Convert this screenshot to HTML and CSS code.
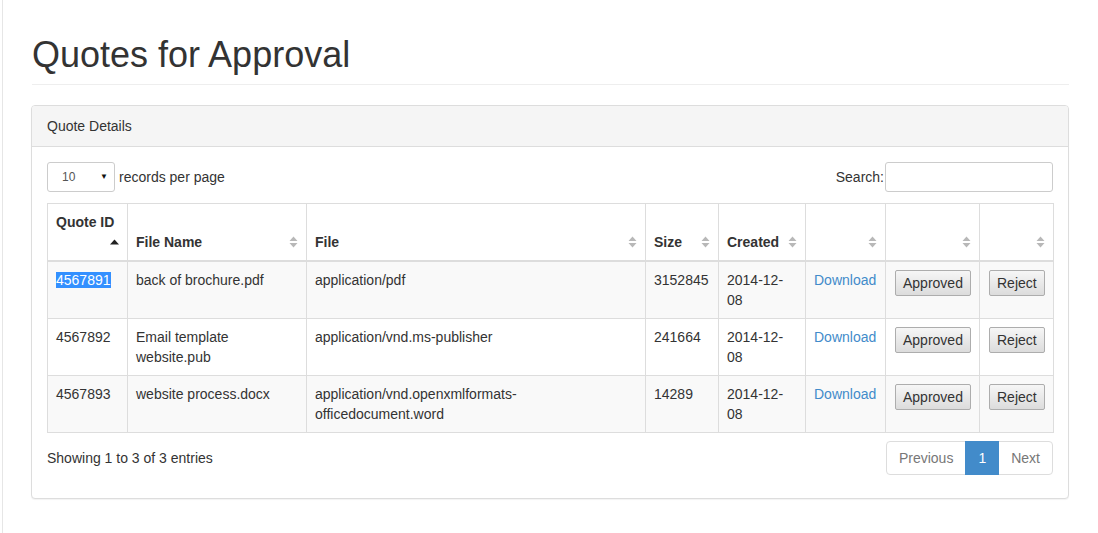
FILE: index.html
```html
<!DOCTYPE html>
<html>
<head>
<meta charset="utf-8">
<link rel="stylesheet" href="styles.css">
</head>
<body>
<div class="page">
  <div class="container">
    <h1 class="page-header">Quotes for Approval</h1>
    <div class="panel">
      <div class="panel-heading">Quote Details</div>
      <div class="panel-body">
        <div class="controls">
          <div class="length">
            <div class="fake-select"><span>10</span><span class="caret">&#9660;</span></div>
            <span>records per page</span>
          </div>
          <div class="search">
            <label>Search:</label>
            <input type="text" class="search-input">
          </div>
        </div>
        <table class="grid">
          <colgroup>
            <col style="width:80px"><col style="width:179px"><col style="width:339px"><col style="width:73px"><col style="width:87px"><col style="width:80px"><col style="width:94px"><col style="width:74px">
          </colgroup>
          <thead>
            <tr>
              <th>Quote ID<span class="sort asc"><svg width="9" height="6" viewBox="0 0 9 6"><path d="M0 5.5 L4.5 0.5 L9 5.5Z" fill="#222"/></svg></span></th>
              <th>File Name<span class="sort"><svg width="9" height="12" viewBox="0 0 9 12"><path d="M0.5 5 L4.5 0.5 L8.5 5Z M0.5 7 L4.5 11.5 L8.5 7Z" fill="#b8b8b8"/></svg></span></th>
              <th>File<span class="sort"><svg width="9" height="12" viewBox="0 0 9 12"><path d="M0.5 5 L4.5 0.5 L8.5 5Z M0.5 7 L4.5 11.5 L8.5 7Z" fill="#b8b8b8"/></svg></span></th>
              <th>Size<span class="sort"><svg width="9" height="12" viewBox="0 0 9 12"><path d="M0.5 5 L4.5 0.5 L8.5 5Z M0.5 7 L4.5 11.5 L8.5 7Z" fill="#b8b8b8"/></svg></span></th>
              <th>Created<span class="sort"><svg width="9" height="12" viewBox="0 0 9 12"><path d="M0.5 5 L4.5 0.5 L8.5 5Z M0.5 7 L4.5 11.5 L8.5 7Z" fill="#b8b8b8"/></svg></span></th>
              <th><span class="sort"><svg width="9" height="12" viewBox="0 0 9 12"><path d="M0.5 5 L4.5 0.5 L8.5 5Z M0.5 7 L4.5 11.5 L8.5 7Z" fill="#b8b8b8"/></svg></span></th>
              <th><span class="sort"><svg width="9" height="12" viewBox="0 0 9 12"><path d="M0.5 5 L4.5 0.5 L8.5 5Z M0.5 7 L4.5 11.5 L8.5 7Z" fill="#b8b8b8"/></svg></span></th>
              <th><span class="sort"><svg width="9" height="12" viewBox="0 0 9 12"><path d="M0.5 5 L4.5 0.5 L8.5 5Z M0.5 7 L4.5 11.5 L8.5 7Z" fill="#b8b8b8"/></svg></span></th>
            </tr>
          </thead>
          <tbody>
            <tr class="odd">
              <td><span class="selected">4567891</span></td>
              <td>back of brochure.pdf</td>
              <td>application/pdf</td>
              <td>3152845</td>
              <td>2014-12-08</td>
              <td><a href="#" class="link">Download</a></td>
              <td><button class="btn">Approved</button></td>
              <td><button class="btn">Reject</button></td>
            </tr>
            <tr>
              <td>4567892</td>
              <td>Email template website.pub</td>
              <td>application/vnd.ms-publisher</td>
              <td>241664</td>
              <td>2014-12-08</td>
              <td><a href="#" class="link">Download</a></td>
              <td><button class="btn">Approved</button></td>
              <td><button class="btn">Reject</button></td>
            </tr>
            <tr class="odd">
              <td>4567893</td>
              <td>website process.docx</td>
              <td>application/vnd.openxmlformats-officedocument.word</td>
              <td>14289</td>
              <td>2014-12-08</td>
              <td><a href="#" class="link">Download</a></td>
              <td><button class="btn">Approved</button></td>
              <td><button class="btn">Reject</button></td>
            </tr>
          </tbody>
        </table>
        <div class="footer">
          <div class="info">Showing 1 to 3 of 3 entries</div>
          <div class="pagination">
            <span class="pg disabled">Previous</span>
            <span class="pg active">1</span>
            <span class="pg disabled">Next</span>
          </div>
        </div>
      </div>
    </div>
  </div>
</div>
</body>
</html>
```
FILE: styles.css
```css
html, body {
  margin: 0;
  padding: 0;
  background: #fff;
}
body {
  font-family: "Liberation Sans", Arial, sans-serif;
  font-size: 14px;
  line-height: 20px;
  color: #333;
}
.page {
  margin-left: 2px;
  border-left: 1px solid #e6e6e6;
  min-height: 533px;
  box-sizing: border-box;
}
.container {
  padding: 35px 29px 0 28px;
}
.page-header {
  margin: 0 0 20px 1px;
  padding-bottom: 9px;
  border-bottom: 1px solid #eee;
  font-size: 36px;
  font-weight: 500;
  line-height: 39.6px;
  color: #333;
}
.panel {
  border: 1px solid #ddd;
  border-radius: 4px;
  box-shadow: 0 1px 1px rgba(0,0,0,0.05);
  background: #fff;
}
.panel-heading {
  background: #f5f5f5;
  border-bottom: 1px solid #ddd;
  padding: 10px 15px;
  border-radius: 3px 3px 0 0;
  color: #333;
}
.panel-body {
  padding: 15px;
}
.controls {
  display: flex;
  justify-content: space-between;
  align-items: center;
  margin-bottom: 11px;
}
.length {
  display: flex;
  align-items: center;
  gap: 4px;
}
.fake-select {
  box-sizing: border-box;
  width: 68px;
  height: 30px;
  border: 1px solid #ccc;
  border-radius: 3px;
  display: flex;
  justify-content: space-between;
  align-items: center;
  padding: 0 6px 0 14px;
  font-size: 12px;
  color: #555;
}
.caret {
  font-size: 8px;
  color: #111;
}
.search {
  display: flex;
  align-items: center;
  gap: 1px;
}
.search-input {
  box-sizing: border-box;
  width: 168px;
  height: 30px;
  border: 1px solid #ccc;
  border-radius: 3px;
  margin: 0;
  font: inherit;
}
.grid {
  width: 1006px;
  table-layout: fixed;
  border-collapse: collapse;
  border: 1px solid #ddd;
}
.grid th, .grid td {
  border: 1px solid #ddd;
  padding: 8px;
  text-align: left;
  word-wrap: break-word;
}
.grid th {
  vertical-align: bottom;
  font-weight: bold;
  border-bottom: 2px solid #ddd;
  color: #333;
}
.grid td {
  vertical-align: top;
}
.grid tr.odd td {
  background: #f9f9f9;
}
.sort {
  float: right;
  display: inline-flex;
  align-items: center;
  height: 20px;
}
.sort svg {
  display: block;
}
.selected {
  background: #3390ff;
  color: #fff;
}
.link {
  color: #428bca;
  text-decoration: none;
}
.btn {
  font-family: "Liberation Sans", Arial, sans-serif;
  font-size: 14px;
  line-height: 18px;
  color: #333;
  padding: 3px 7px 3px 7px;
  border: 1px solid #adadad;
  border-radius: 2px;
  background: linear-gradient(#f6f6f6, #dcdcdc);
  margin: 0 0 0 1px;
  cursor: pointer;
}
.footer {
  display: flex;
  justify-content: space-between;
  align-items: center;
  margin-top: 8px;
  margin-bottom: 8px;
}
.pagination {
  display: flex;
  border-radius: 4px;
}
.pg {
  padding: 6px 12px;
  line-height: 20px;
  border: 1px solid #ddd;
  margin-left: -1px;
  color: #777;
  background: #fff;
}
.pg:first-child {
  border-radius: 4px 0 0 4px;
  margin-left: 0;
}
.pg:last-child {
  border-radius: 0 4px 4px 0;
}
.pg.active {
  background: #428bca;
  border-color: #428bca;
  color: #fff;
  position: relative;
}
```
